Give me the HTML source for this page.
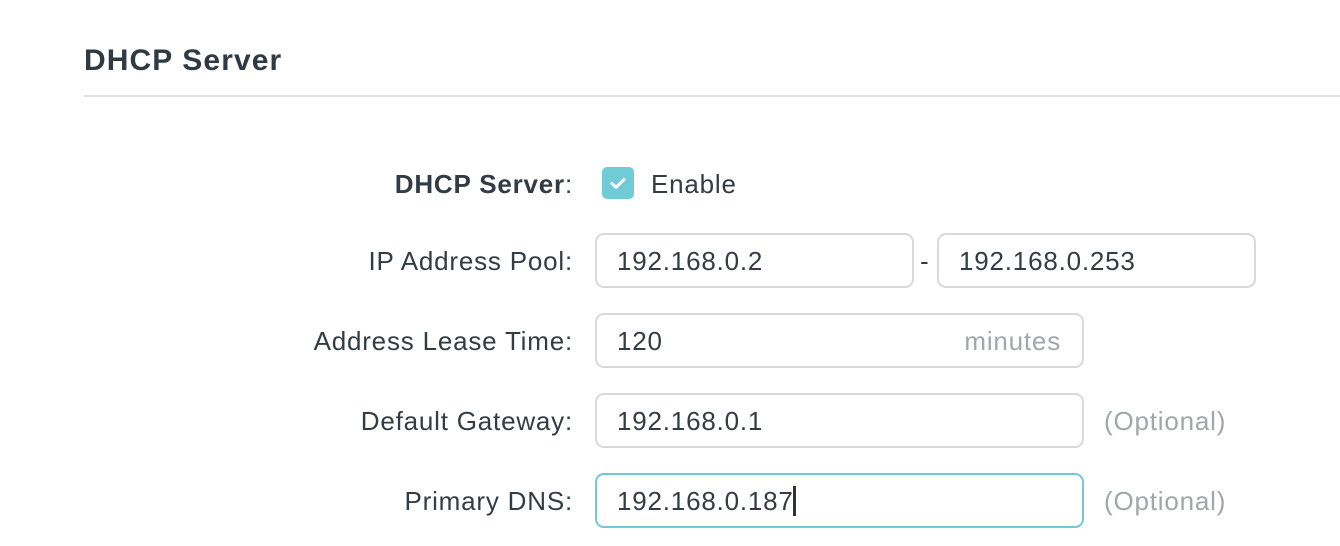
<!DOCTYPE html>
<html><head><style>
body{margin:0;width:1340px;height:546px;background:#fff;font-family:"Liberation Sans",Arial,sans-serif;color:#333c45;position:relative;overflow:hidden}
.a{position:absolute}
.t{left:84px;top:44px;font-size:30px;font-weight:bold;color:#2f3a44;letter-spacing:1.1px}
.hr{left:84px;top:95px;width:1256px;height:2px;background:#e1e1e1}
.l{right:767px;font-size:26px;line-height:30px;letter-spacing:0.8px}
.in{border:2px solid #d9d9d9;border-radius:9px;box-sizing:border-box;height:55px;font-size:26px;line-height:52px;padding-left:20px;letter-spacing:0.8px}
.g{color:#a2a6aa;font-size:26px;line-height:30px;letter-spacing:0.8px}
</style></head><body>
<div class="a t">DHCP Server</div>
<div class="a hr"></div>
<div class="a l" style="top:169px"><b>DHCP Server</b>:</div>
<div class="a" style="left:602px;top:167px;width:32px;height:32px;border-radius:5px;background:#6fcbd6">
<svg width="32" height="32"><path d="M10 16.5l4 4 8-8" stroke="#fff" stroke-width="3" fill="none" stroke-linecap="round" stroke-linejoin="round"/></svg></div>
<div class="a" style="left:651px;top:169px;font-size:26px;line-height:30px;letter-spacing:0.8px">Enable</div>

<div class="a l" style="top:246px">IP Address Pool:</div>
<div class="a in" style="left:595px;top:233px;width:319px">192.168.0.2</div>
<div class="a" style="left:920px;top:246px;font-size:26px;line-height:30px">-</div>
<div class="a in" style="left:937px;top:233px;width:319px">192.168.0.253</div>

<div class="a l" style="top:326px">Address Lease Time:</div>
<div class="a in" style="left:595px;top:313px;width:489px">120<span style="position:absolute;right:21px;color:#a2a6aa">minutes</span></div>

<div class="a l" style="top:406px">Default Gateway:</div>
<div class="a in" style="left:595px;top:393px;width:489px">192.168.0.1</div>
<div class="a g" style="left:1104px;top:406px">(Optional)</div>

<div class="a l" style="top:486px">Primary DNS:</div>
<div class="a in" style="left:595px;top:473px;width:489px;border-color:#72c8d4">192.168.0.187<span style="display:inline-block;width:3px;height:30px;background:#333;vertical-align:-6px;margin-left:-1px"></span></div>
<div class="a g" style="left:1104px;top:486px">(Optional)</div>
</body></html>
